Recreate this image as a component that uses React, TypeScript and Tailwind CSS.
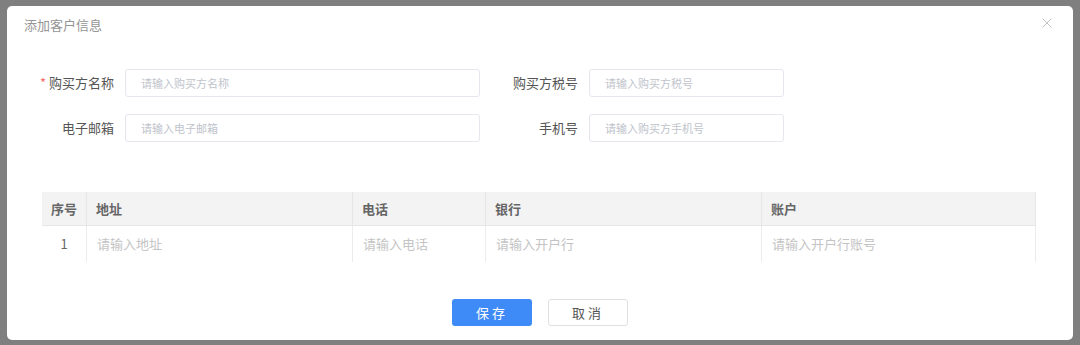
import { X } from "lucide-react";

const font = { fontFamily: '"Noto Sans CJK SC", "Liberation Sans", sans-serif' };

function Field({
  label,
  placeholder,
  labelW,
  inputW,
  required,
}: {
  label: string;
  placeholder: string;
  labelW: string;
  inputW: string;
  required?: boolean;
}) {
  return (
    <div className="flex items-center">
      <label className={`${labelW} shrink-0 pr-[11px] text-right text-[13px] text-[#555]`}>
        {required && <span className="mr-[3px] text-[#f56c6c]">*</span>}
        {label}
      </label>
      <div
        className={`${inputW} flex h-[28px] items-center rounded-[3px] border border-[#e4e7ed] pl-[15px] text-[11px] text-[#c0c4cc]`}
      >
        {placeholder}
      </div>
    </div>
  );
}

const cols = [
  { title: "序号", w: "w-[45px]", cell: "1", center: true },
  { title: "地址", w: "w-[266px]", cell: "请输入地址" },
  { title: "电话", w: "w-[133px]", cell: "请输入电话" },
  { title: "银行", w: "w-[276px]", cell: "请输入开户行" },
  { title: "账户", w: "w-[274px]", cell: "请输入开户行账号" },
];

export default function App() {
  return (
    <div className="h-[345px] w-[1080px] overflow-hidden bg-[#7f7f7f] px-[7px] pt-[6px]" style={font}>
      <div className="relative flex h-[334px] w-[1066px] flex-col rounded-[5px] bg-white">
        {/* header */}
        <div className="flex h-[36px] items-center pl-[17px] pt-[1px] text-[13px] text-[#959595]">
          添加客户信息
        </div>
        <button className="absolute right-[18px] top-[9px] text-[#b4b4b4]">
          <X size={16} strokeWidth={1.2} />
        </button>

        {/* form */}
        <div className="mt-[27px] flex flex-col gap-[17px] pl-[17px]">
          <div className="flex">
            <Field label="购买方名称" placeholder="请输入购买方名称" labelW="w-[101px]" inputW="w-[355px]" required />
            <Field label="购买方税号" placeholder="请输入购买方税号" labelW="w-[109px]" inputW="w-[195px]" />
          </div>
          <div className="flex">
            <Field label="电子邮箱" placeholder="请输入电子邮箱" labelW="w-[101px]" inputW="w-[355px]" />
            <Field label="手机号" placeholder="请输入购买方手机号" labelW="w-[109px]" inputW="w-[195px]" />
          </div>
        </div>

        {/* table */}
        <div className="ml-[35px] mt-[50px] w-[994px]">
          <div className="flex h-[34px] border-b border-[#e6e6e6] bg-[#f3f3f3]">
            {cols.map((c) => (
              <div
                key={c.title}
                className={`${c.w} flex items-center border-r border-[#e6e6e6] text-[13px] font-bold text-[#666] ${
                  c.center ? "justify-center" : "pl-[9px]"
                }`}
              >
                {c.title}
              </div>
            ))}
          </div>
          <div className="flex h-[36px]">
            {cols.map((c) => (
              <div
                key={c.title}
                className={`${c.w} flex items-center border-r border-[#ececec] text-[13px] ${
                  c.center ? "justify-center text-[#666]" : "pl-[10px] text-[#c4c4c4]"
                }`}
              >
                {c.cell}
              </div>
            ))}
          </div>
        </div>

        {/* footer */}
        <div className="mt-[37px] flex justify-center gap-[16px]">
          <button className="h-[27px] w-[80px] rounded-[3px] bg-[#3e8af7] text-[13px] tracking-[3px] text-white">
            保存
          </button>
          <button className="h-[27px] w-[80px] rounded-[3px] border border-[#e0e0e0] bg-white text-[13px] tracking-[3px] text-[#555]">
            取消
          </button>
        </div>
      </div>
    </div>
  );
}
